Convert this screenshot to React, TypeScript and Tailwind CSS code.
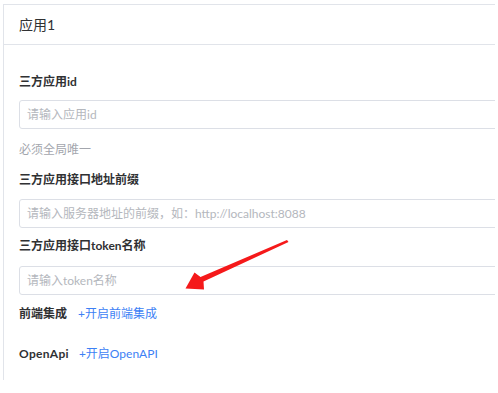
import React from "react";

const font = { fontFamily: 'Lato, "Noto Sans CJK SC", "Noto Sans", sans-serif' };

function Input({ placeholder, className = "" }: { placeholder: string; className?: string }) {
  return (
    <div
      className={`w-[490px] h-[29px] border border-[#dcdfe6] rounded-[3px] flex items-center pl-[7px] text-[12px] text-[#b4b7bd] ${className}`}
    >
      {placeholder}
    </div>
  );
}

export default function App() {
  return (
    <div className="w-[498px] h-[393px] bg-white overflow-hidden relative" style={font}>
      <div className="ml-[3px] mt-[4px] w-[492px] h-[376px] border-l border-t border-[#e1e4ea] overflow-hidden">
        <div className="h-[40px] border-b border-[#e1e4ea] flex items-center pl-[15px] text-[14px] text-[#303133]">
          应用1
        </div>
        <div className="pl-[15px] pt-[28px] text-[12px] leading-[18px]">
          <div className="font-bold text-[#303133]">三方应用id</div>
          <Input className="mt-[9px]" placeholder="请输入应用id" />
          <div className="mt-[12px] text-[#a3a6ad]">必须全局唯一</div>
          <div className="mt-[12px] font-bold text-[#303133]">三方应用接口地址前缀</div>
          <Input className="mt-[10px]" placeholder="请输入服务器地址的前缀，如：http://localhost:8088" />
          <div className="mt-[9px] font-bold text-[#303133]">三方应用接口token名称</div>
          <Input className="mt-[11px]" placeholder="请输入token名称" />
          <div className="mt-[10px] flex gap-[11px]">
            <span className="font-bold text-[#303133]">前端集成</span>
            <span className="text-[#3d7ff5]">+开启前端集成</span>
          </div>
          <div className="mt-[22px] flex gap-[10px]">
            <span className="font-bold text-[#303133] tracking-[0.3px]">OpenApi</span>
            <span className="text-[#3d7ff5]">+开启OpenAPI</span>
          </div>
        </div>
      </div>
      <svg className="absolute left-0 top-0 pointer-events-none" width="498" height="393" viewBox="0 0 498 393">
        <polygon
          points="287,240 288.5,242 203.5,281.5 204,289.5 185.5,288.5 194.5,272.5 200.5,277"
          fill="#f5191a"
        />
      </svg>
    </div>
  );
}
